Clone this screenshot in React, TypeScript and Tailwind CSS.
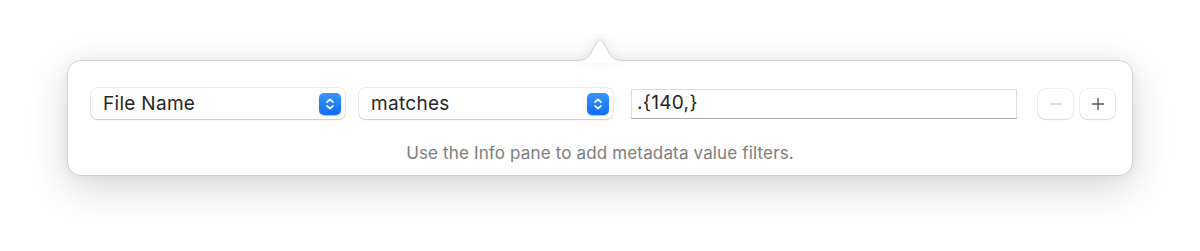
import React from "react";

const font = { fontFamily: "Inter, 'Liberation Sans', sans-serif" };

function Stepper() {
  return (
    <span className="flex size-[22px] items-center justify-center rounded-[5px] bg-gradient-to-b from-[#3b93ff] to-[#0a6ff0] shadow-[0_0.5px_1px_rgba(0,0,0,0.25)]">
      <svg width="22" height="22" viewBox="0 0 22 22" fill="none">
        <path d="M8 9.2 11 6.4 14 9.2" stroke="white" strokeWidth="1.7" strokeLinecap="round" strokeLinejoin="round" />
        <path d="M8 12.8 11 15.6 14 12.8" stroke="white" strokeWidth="1.7" strokeLinecap="round" strokeLinejoin="round" />
      </svg>
    </span>
  );
}

function PopUp({ label }: { label: string }) {
  return (
    <div className="flex h-[31px] w-[254px] items-center justify-between rounded-[6px] bg-white pl-[12px] pr-[4px] shadow-[0_0_0_0.5px_rgba(0,0,0,0.14),0_1px_1.5px_rgba(0,0,0,0.14)]">
      <span className="text-[19px] leading-none tracking-[0.3px] text-[#262626]">{label}</span>
      <Stepper />
    </div>
  );
}

function SquareButton({ children, disabled }: { children: React.ReactNode; disabled?: boolean }) {
  return (
    <button
      className={
        "flex h-[30px] w-[35px] items-center justify-center rounded-[7px] bg-white shadow-[0_0_0_0.5px_rgba(0,0,0,0.12),0_1px_1.5px_rgba(0,0,0,0.1)] " +
        (disabled ? "text-[#d4d4d4]" : "text-[#555555]")
      }
    >
      {children}
    </button>
  );
}

export default function App() {
  return (
    <div className="flex h-[251px] w-full justify-center bg-white pt-[60px]" style={font}>
      <div className="relative h-[116px] w-[1066px] rounded-[14px] border border-[#d2d2d2] bg-white shadow-[0_12px_40px_rgba(0,0,0,0.16),0_0_12px_rgba(0,0,0,0.05)]">
        {/* popover arrow */}
        <svg
          className="absolute -top-[24px] left-1/2 -translate-x-1/2 overflow-visible drop-shadow-[0_-2px_6px_rgba(0,0,0,0.07)]"
          width="44"
          height="24"
          viewBox="0 0 44 24"
        >
          <path d="M0 23.5 C6 23.5 9.5 21.5 12.5 17 L19 5 Q22 0.6 25 5 L31.5 17 C34.5 21.5 38 23.5 44 23.5 L44 26 L0 26 Z" fill="white" />
          <path d="M0 23.5 C6 23.5 9.5 21.5 12.5 17 L19 5 Q22 0.6 25 5 L31.5 17 C34.5 21.5 38 23.5 44 23.5" fill="none" stroke="#d2d2d2" strokeWidth="1" />
        </svg>

        <div className="flex items-center pl-[23px] pr-[17px] pt-[27px]">
          <PopUp label="File Name" />
          <div className="w-[14px]" />
          <PopUp label="matches" />
          <div className="ml-[18px] flex h-[30px] w-[386px] items-center border border-[#dcdcdc] border-b-[#a8a8a8] bg-white pl-[5px] text-[19px] tracking-[0.3px] text-[#262626]">
            .{"{"}140,{"}"}
          </div>
          <div className="ml-[21px] flex gap-[7px]">
            <SquareButton disabled>
              <svg width="14" height="14" viewBox="0 0 14 14">
                <path d="M1.5 7h11" stroke="currentColor" strokeWidth="1.3" strokeLinecap="round" />
              </svg>
            </SquareButton>
            <SquareButton>
              <svg width="14" height="14" viewBox="0 0 14 14">
                <path d="M1.5 7h11M7 1.5v11" stroke="currentColor" strokeWidth="1.3" strokeLinecap="round" />
              </svg>
            </SquareButton>
          </div>
        </div>

        <p className="mt-[26px] text-center text-[17px] leading-none tracking-[0.15px] text-[#7d7d7d]">
          Use the Info pane to add metadata value filters.
        </p>
      </div>
    </div>
  );
}
